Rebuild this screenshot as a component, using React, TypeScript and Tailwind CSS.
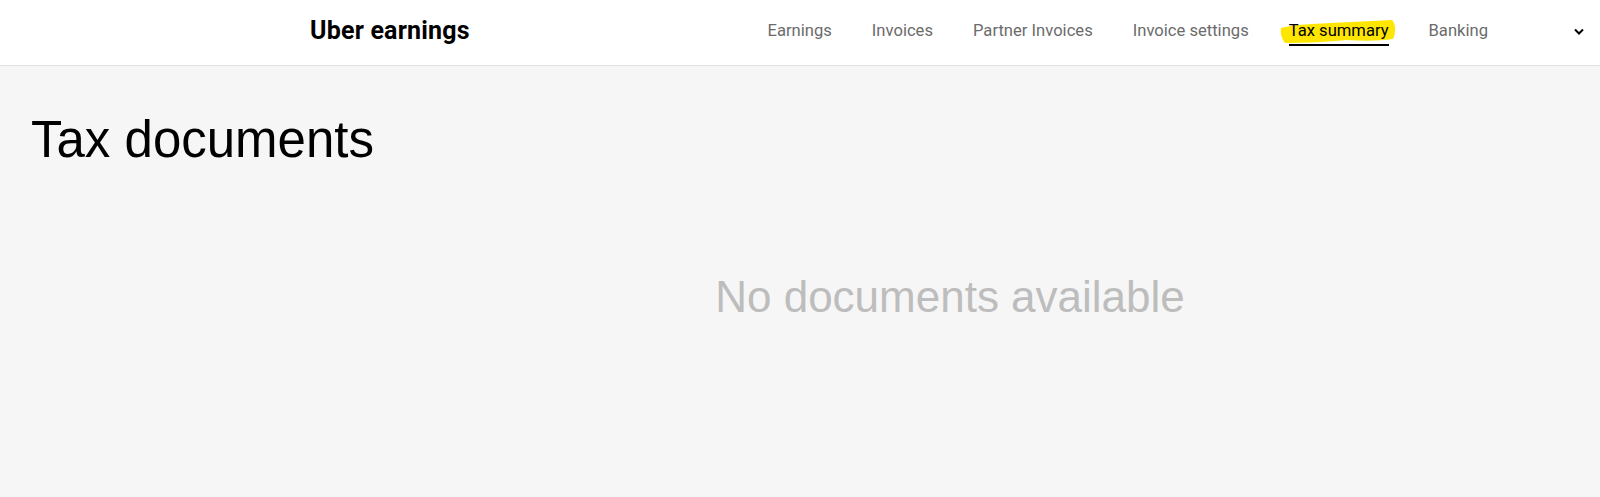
import React from 'react';

const navItems = ['Earnings', 'Invoices', 'Partner Invoices', 'Invoice settings', 'Tax summary', 'Banking'];

// marker-style highlight drawn over the active tab
const Highlight: React.FC = () => (
  <svg
    className="absolute left-[-9px] top-[-1px] w-[116px] h-[25px] pointer-events-none"
    viewBox="0 0 116 25"
    preserveAspectRatio="none"
  >
    <path
      d="M1 9 C12 6 30 5 50 4 C72 3 92 2 112 1 C116 5 116 14 113 20 C100 22 84 22 66 21 C48 23 26 24 5 24 C2 20 0 14 1 9 Z"
      fill="#ffe600"
    />
  </svg>
);

const App: React.FC = () => {
  const active = 'Tax summary';

  return (
    <div className="min-h-screen flex flex-col bg-[#f6f6f6] font-['Roboto',sans-serif]">
      {/* Top bar */}
      <header className="h-[66px] bg-white border-b border-[#e2e2e2] flex items-center pb-[3px]">
        <h1 className="pl-[310px] text-[25px] font-bold text-black tracking-[0.2px]">Uber earnings</h1>
        <nav className="ml-auto flex items-center gap-[40px]">
          {navItems.map((item) => (
            <a
              key={item}
              className={`relative text-[16.6px] leading-[22px] ${
                item === active ? 'text-black' : 'text-[#6b6b6b]'
              }`}
            >
              {item === active && <Highlight />}
              <span className="relative">{item}</span>
              {item === active && (
                <span className="absolute left-0 right-0 top-[24px] h-[2px] bg-black" />
              )}
            </a>
          ))}
        </nav>
        <button className="ml-[86px] mr-[16px] w-[10px] flex items-center justify-center">
          <svg width="10" height="7" viewBox="0 0 10 7">
            <path d="M1 1.5 L5 5.5 L9 1.5" fill="none" stroke="#000" strokeWidth="2" />
          </svg>
        </button>
      </header>

      {/* Content */}
      <main className="flex-1 font-['Liberation_Sans',Arial,sans-serif]">
        <h2 className="pl-[31px] pt-[45px] text-[51px] leading-[58px] text-black">Tax documents</h2>
        <div className="pl-[300px] pt-[103px] text-center">
          <p className="text-[44px] leading-[50px] text-[#bdbdbd]">No documents available</p>
        </div>
      </main>
    </div>
  );
};

export default App;
